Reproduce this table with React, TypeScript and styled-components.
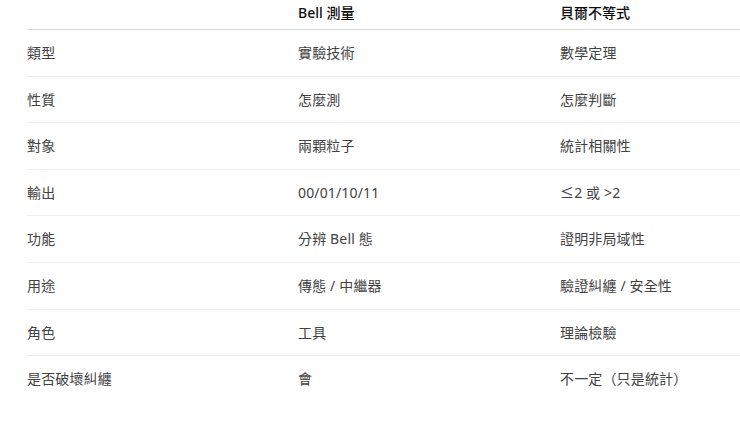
import React from "react";
import styled, { createGlobalStyle } from "styled-components";

const GlobalStyle = createGlobalStyle`
  html, body {
    margin: 0;
    padding: 0;
    background: #ffffff;
  }
  body {
    font-family: "Noto Sans", "Noto Sans CJK TC", sans-serif;
  }
`;

const rows: [string, string, string][] = [
  ["類型", "實驗技術", "數學定理"],
  ["性質", "怎麼測", "怎麼判斷"],
  ["對象", "兩顆粒子", "統計相關性"],
  ["輸出", "00/01/10/11", "≤2 或 >2"],
  ["功能", "分辨 Bell 態", "證明非局域性"],
  ["用途", "傳態 / 中繼器", "驗證糾纏 / 安全性"],
  ["角色", "工具", "理論檢驗"],
  ["是否破壞糾纏", "會", "不一定（只是統計）"],
];

export default function App() {
  return (
    <>
      <GlobalStyle />
      <Page>
        <Table>
          <HeadRow>
            <HeadCell />
            <HeadCell>Bell 測量</HeadCell>
            <HeadCell>貝爾不等式</HeadCell>
          </HeadRow>
          {rows.map((r, i) => (
            <Row key={r[0]} $last={i === rows.length - 1}>
              {r.map((c, j) => (
                <Cell key={j}>{c}</Cell>
              ))}
            </Row>
          ))}
        </Table>
      </Page>
    </>
  );
}

const Page = styled.div`
  width: 740px;
  height: 426px;
  overflow: hidden;
  padding-left: 27px;
  box-sizing: border-box;
`;

const Table = styled.div`
  width: 713px;
  display: flex;
  flex-direction: column;
  font-size: 14px;
`;

const HeadRow = styled.div`
  display: grid;
  grid-template-columns: 271px 262px 1fr;
  padding: 2px 0 5px;
  line-height: 22px;
  border-bottom: 1px solid #d9d9d9;
`;

const HeadCell = styled.div`
  font-weight: 500;
  color: #0d0d0d;
  white-space: nowrap;
`;

const Row = styled.div<{ $last?: boolean }>`
  display: grid;
  grid-template-columns: 271px 262px 1fr;
  padding: 12px 0;
  line-height: 21.6px;
  border-bottom: 1px solid ${(p) => (p.$last ? "transparent" : "#ededed")};
`;

const Cell = styled.div`
  color: #424242;
  white-space: nowrap;
  letter-spacing: 0.15px;
`;
